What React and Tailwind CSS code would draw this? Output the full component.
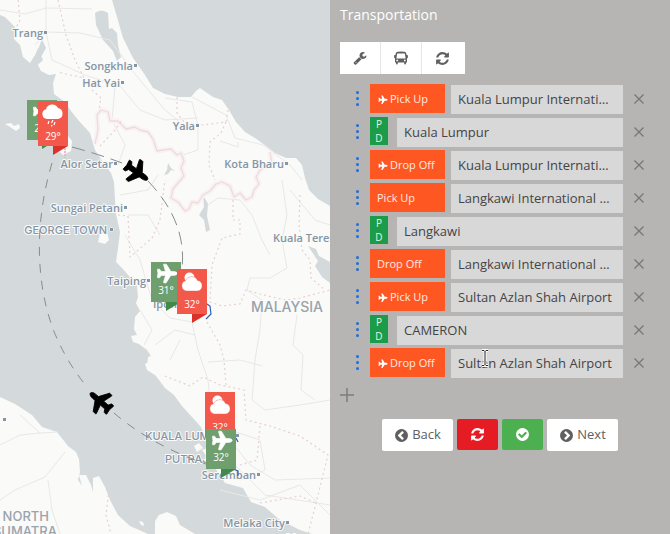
const SOLID = {
  refresh:
    "M1639 1056q0 5-1 7-64 268-268 434.5t-478 166.5q-146 0-282.5-55t-243.5-157l-129 129q-19 19-45 19t-45-19-19-45v-448q0-26 19-45t45-19h448q26 0 45 19t19 45-19 45l-137 137q71 66 161 102t187 36q134 0 250-65t186-179q11-17 53-117 8-23 30-23h192q13 0 22.5 9.5t9.5 22.5zm25-800v448q0 26-19 45t-45 19h-448q-26 0-45-19t-19-45 19-45l138-138q-148-137-349-137-134 0-250 65t-186 179q-11 17-53 117-8 23-30 23h-199q-13 0-22.5-9.5t-9.5-22.5v-7q65-268 270-434.5t480-166.5q146 0 284 55.5t245 156.5l130-129q19-19 45-19t45 19 19 45z",
  plane:
    "M1568 160q44 52 12 148t-108 172l-161 161 160 696q5 19-12 33l-128 96q-7 6-19 6-4 0-7-1-15-3-21-16l-279-508-259 259 53 194q5 17-8 31l-96 96q-9 9-23 9h-2q-15-2-24-13l-189-252-252-189q-11-7-13-23-1-13 9-25l96-97q9-9 23-9 6 0 8 1l194 53 259-259-508-279q-14-8-17-24-2-16 9-27l128-128q14-13 30-8l665 159 160-160q76-76 172-108t148 12z",
  chevron:
    "M1037 1395l102-102q19-19 19-45t-19-45l-307-307 307-307q19-19 19-45t-19-45l-102-102q-19-19-45-19t-45 19l-454 454q-19 19-19 45t19 45l454 454q19 19 45 19t45-19zm627-499q0 209-103 385.5t-279.5 279.5-385.5 103-385.5-103-279.5-279.5-103-385.5 103-385.5 279.5-279.5 385.5-103 385.5 103 279.5 279.5 103 385.5z",
  check:
    "M1412 734q0-28-18-46l-91-90q-19-19-45-19t-45 19l-408 407-226-226q-19-19-45-19t-45 19l-91 90q-18 18-18 46 0 27 18 45l362 362q19 19 45 19 27 0 46-19l543-543q18-18 18-45zm252 162q0 209-103 385.5t-279.5 279.5-385.5 103-385.5-103-279.5-279.5-103-385.5 103-385.5 279.5-279.5 385.5-103 385.5 103 279.5 279.5 103 385.5z",
  wrench:
    "M448 1472q0-26-19-45t-45-19-45 19-19 45 19 45 45 19 45-19 19-45zm644-420l-682 682q-37 37-90 37-52 0-91-37l-106-108q-38-36-38-90 0-53 38-91l681-681q39 98 114.5 173.5t173.5 114.5zm634-435q0 39-23 106-47 134-164.5 217.5t-258.5 83.5q-185 0-316.5-131.5t-131.5-316.5 131.5-316.5 316.5-131.5q58 0 121.5 16.5t107.5 46.5q16 11 16 28t-16 28l-293 169v224l193 107q5-3 79-48.5t135.5-81 70.5-35.5q15 0 23.5 10t8.5 25z",
};

function Icon({ name, className = "" }) {
  return (
    <svg viewBox="0 0 1792 1792" className={`shrink-0 fill-current ${className}`} aria-hidden="true">
      <path d={SOLID[name]} />
    </svg>
  );
}

function BusIcon() {
  return (
    <svg viewBox="0 0 14 14" className="size-[14px] shrink-0" aria-hidden="true">
      <path
        fill="currentColor"
        fillRule="evenodd"
        d="M3.500 .8Q7 .1 10.500 .8Q12 1.100 12.300 2.500L12.600 4H13.200Q13.900 4 13.900 4.700V6.500Q13.900 7.200 13.200 7.200H13V11.500H12V12.500Q12 13.400 11.100 13.400Q10.200 13.400 10.200 12.500V11.500H3.800V12.500Q3.800 13.400 2.900 13.400Q2 13.400 2 12.500V11.500H1V7.200H.8Q.1 7.200 .1 6.500V4.700Q.1 4 .8 4H1.400L1.700 2.500Q2 1.100 3.500 .8ZM3.200 2.600L2.400 7.400H11.600L10.800 2.600ZM3.200 8.500A.9 .9 0 1 0 3.200 10.300A.9 .9 0 1 0 3.200 8.500ZM10.800 8.500A.9 .9 0 1 0 10.800 10.300A.9 .9 0 1 0 10.800 8.500Z"
      />
    </svg>
  );
}

function MapPlane({ x, y, size, angle, fill }) {
  const s = size / 1792;
  return (
    <path
      d={SOLID.plane}
      fill={fill}
      stroke={fill}
      strokeWidth="50"
      transform={`translate(${x} ${y}) rotate(${angle}) scale(${s}) translate(-896 -896)`}
    />
  );
}

function AirportFlag({ x, y, temp }) {
  return (
    <g transform={`translate(${x} ${y})`}>
      <path d="M15 40H30L15 49Z" fill="#3f8a4b" />
      <rect width="30" height="40" fill="#6f9f6f" />
      <MapPlane x={14} y={12} size={22} angle={45} fill="#fff" />
      <text x="15" y="32" textAnchor="middle" fontSize="10" fill="#fff">{temp}</text>
    </g>
  );
}

function WeatherFlag({ x, y, temp, rain }) {
  return (
    <g transform={`translate(${x} ${y})`}>
      <path d="M15 45H30L15 54Z" fill="#d8322a" />
      <rect width="30" height="45" fill="#f2594b" />
      {rain ? (
        <g fill="#fff">
          <path d="M9 18a5 5 0 0 1-1-9.800A6.500 6.500 0 0 1 20 7a5.600 5.600 0 0 1 0 11Z" />
          <path d="M11 20l-1 3M15 19l-1.500 3M14 24l-.5 1.500M17 21l-1 3" stroke="#fff" strokeWidth="1.200" />
        </g>
      ) : (
        <g fill="#fff">
          <circle cx="12.500" cy="8.500" r="5" />
          <path d="M9.500 22a5.300 5.300 0 0 1-1-10.300A6.500 6.500 0 0 1 20.500 11.500a5.300 5.300 0 0 1 0 10.500Z" stroke="#f2594b" strokeWidth=".4" />
        </g>
      )}
      <text x="15" y="39" textAnchor="middle" fontSize="10" fill="#fff">{temp}</text>
    </g>
  );
}

const towns = [
  ["Trang", 43, 37],
  ["Songkhla", 133, 70],
  ["Hat Yai", 120, 87],
  ["Yala", 195, 130],
  ["Alor Setar", 113, 168],
  ["Kota Bharu", 284, 168],
  ["Sungai Petani", 123, 212],
  ["Taiping", 146, 285],
  ["Seremban", 256, 479],
  ["Melaka City", 285, 527],
];

function RouteMap() {
  return (
    <svg
      viewBox="0 0 330 534"
      preserveAspectRatio="xMinYMin slice"
      className="block h-screen min-w-0 flex-1 bg-[#d4dadc] font-['Open_Sans','Noto_Sans',sans-serif]"
      role="img"
      aria-label="Route map of Malaysia"
    >
      <path
        fill="#fafaf8"
        d="M0 0V15L5 17 15 27 14 39 20 45 23 57 30 63 35 55 39 47 42 39 46 48 41 57 38 65 41 71 49 75 56 74 53 83 54 94 65 102 71 111 79 121 90 133 95 150 103 162 111 173 114 182 115 200 116 214 120 232 118 248 116 262 122 268 129 276 137 286 138 297 136 303 140 311 135 317 134 329 137 335 131 336 133 342 139 344 147 350 151 356 150 361 145 364 147 370 155 375 159 380 165 388 174 395 182 406 192 417 201 427 205 438 208 448 202 450 207 457 203 461 212 464 220 475 225 483 243 488 251 502 265 507 280 520 300 530 312 534H330V206L318 199 309 190 305 178 302 165 296 158 286 158 275 153 266 146 255 138 245 132 236 122 229 110 222 100 213 97 200 88 196 91 191 97 178 97 165 94 153 88 145 75 133 58 123 38 117 17 112 0Z"
      />
      <g fill="#d4dadc">
        <path d="M95 13Q101 8 108 13L109 29 112 28 117 33 118 45 121 57 117 61 113 51 103 40 96 25Z" />
        <path d="M35 57L38 48 40 53 43 60 39 64Z" />
        <path d="M203 195l5 9-1 12 3 14-4 2-2-12-5-5 5-8zM308 246l8 3 3 7 11 6v21l-8-6-7-11 3-5zM168 163l3 5 4 3-4-1-3 4-4 1 3-5z" />
      </g>
      <g fill="#fafaf8">
        <path d="M0 397L15 404 32 415 42 427 57 432 68 446 76 452 79 459 80 472 78 480 82 486 79 475 86 475 91 485 93 492 93 478 99 476 105 487 110 500 118 515 130 526 148 534H0Z" />
        <path d="M155 534V521L159 515 167 512 176 516 180 525 195 534Z" />
        <path d="M68 136l4 5-1 10-8 4-6-6 3-9zM100 234l7-2 2 8-4 4-7-2zM5 124l6-1 3 3 5-2 1 4-4 3-6-4zM139 521l4 1 1 4-3-1z" />
        <path d="M148 357l8-3 9 8v14l-8-3-10-4zM194 446l5-3 4 5-6 4z" />
      </g>

      <g fill="none" stroke="#e8e8e6" strokeWidth="1" strokeLinejoin="round">
        <path d="M46 0V32L35 45M46 32L80 33 110 40 135 74 165 110 185 126M0 10L25 14 46 8 92 9M46 32L52 60 85 75 121 87 140 110 165 120 198 118" />
        <path d="M115 87L112 120 125 145 118 165M165 98L192 102 198 126 198 150 180 156M192 97L226 115 235 138 263 145 290 165 302 180" />
        <path d="M220 141l18 6v-5M120 195L148 190 158 175M128 215h20l12 20M125 235L140 260 152 300 170 318 192 322 198 350 208 380 212 420M155 345l20-15 20 5" />
        <path d="M208 205L218 198 240 200 252 215 262 240 270 255M282 180L287 215 282 240 287 268 270 278 250 278 247 290 262 300 260 330 255 360 252 400 265 410 300 405 330 400" />
        <path d="M290 190L315 220 330 225M297 315L293 345 303 355 301 390 315 400M208 362L240 360 262 366M220 410L230 440 250 465 275 480 330 478M235 465L265 495 330 505M220 490L260 500 300 485 330 515" />
        <path d="M0 445L20 435 40 433 58 432M0 500L15 490 45 477 65 452M48 480L52 510 60 534M20 415l20 18" />
        <path d="M140 310l12 20-8 15M150 280l30 10 20 30M180 340l-10 20M230 430l30 10 5 30-25 10" />
      </g>
      <g fill="none" stroke="#e7cfd3" strokeWidth="1.200" strokeLinejoin="round">
        <g>
          {[
            ["#f8f2f2", 5],
            ["#efdadd", 1.3],
          ].map(([stroke, width]) => (
            <path
              key={stroke}
              stroke={stroke}
              strokeWidth={width}
              d="M95 144L98 130 97 115 101 110 108 112 110 121 118 121 126 129 135 127 140 130 148 132 153 139 157 151 163 150 171 149 177 155 181 153 184 161 181 168 184 176 178 183 173 189 171 198 178 202 185 211 189 209 192 202 198 203 203 195 210 191 216 184 222 182 230 186 234 197 240 193 246 200 252 197 254 190 259 184 256 177 260 170 272 164 270 152"
            />
          ))}
        </g>
        <g strokeDasharray="2 3">
          <path d="M18 0L20 20 15 30M58 0L66 35 75 60 84 78 70 75 58 72M92 90L101 98 99 110M100 146L115 130 122 120M177 97V113L184 122 203 125 226 122 228 110M226 122L221 133 210 142 209 165 215 180" />
          <path d="M118 215L128 216 130 257 152 238 160 220 165 180M233 200V220H240V234L222 238 212 265 210 302 222 306 240 304 246 290 260 294 285 300 300 298 330 290M300 195L299 225 302 250 310 260 311 278 325 290" />
          <path d="M207 322L220 345 224 360 226 385M165 376L190 386 203 377 220 385 244 390 246 420 270 426 300 436 328 455 316 503 308 534M260 503L300 496 316 503M260 426L257 460 240 465" />
          <path d="M109 490L106 515 111 534" />
        </g>
      </g>
      <path d="M65 145v13" stroke="#e9b9c4" strokeWidth="2" strokeDasharray="2 1" />

      <g
        fontSize="11"
        fontWeight="600"
        fill="#8595a5"
        stroke="#fafaf8"
        strokeWidth="2"
        strokeLinejoin="round"
        paintOrder="stroke"
        textAnchor="end"
      >
        {towns.map(([name, x, y]) => (
          <g key={name}>
            <text x={x} y={y}>{name}</text>
            <rect x={x + 1} y={y - 6} width="3" height="3" strokeWidth="1" />
          </g>
        ))}
        <rect x="110" y="228" width="3" height="3" strokeWidth="1" />
        <g textAnchor="start">
          <text x="273" y="242">Kuala Terengganu</text>
          <text x="153" y="308">Ipoh</text>
          <text x="286" y="542">Muar</text>
        </g>
        <g fontFamily="Inter, 'Open Sans', sans-serif" fontWeight="500">
          <text x="107" y="234">GEORGE TOWN</text>
          <g textAnchor="start">
            <text x="145" y="440">KUALA LUMPUR</text>
            <text x="165" y="463">PUTRAJAYA</text>
          </g>
          <g fontSize="13" fill="#98a3ac">
            <text x="323" y="312" fontSize="14">MALAYSIA</text>
            <text x="49" y="521">NORTH</text>
            <text x="57" y="536">SUMATRA</text>
          </g>
        </g>
        <rect x="3" y="418" width="3" height="3" strokeWidth="1" />
        <rect x="236" y="434" width="3" height="3" strokeWidth="1" />
      </g>

      <g fill="none" stroke="#888b8d" strokeWidth="1">
        <path strokeDasharray="13 7" d="M72 147Q98 154 122 163M148 181Q190 225 181 275" />
        <path strokeDasharray="9 8" d="M52 163C35 220 35 280 53 329Q66 362 88 388M114 413Q155 448 215 467" />
      </g>
      <path d="M207 304l3 2 1 8-5 5M236 438l2 4M233 469l5 2v5" fill="none" stroke="#315fb0" strokeWidth="1.200" />

      <MapPlane x={134} y={171} size={29} angle={80} fill="#000" />
      <MapPlane x={103} y={403} size={29} angle={-94} fill="#000" />

      <AirportFlag x={27} y={100} temp="29°" />
      <WeatherFlag x={38} y={101} temp="29°" rain />
      <AirportFlag x={151} y={262} temp="31°" />
      <WeatherFlag x={177} y={269} temp="32°" />
      <WeatherFlag x={205} y={392} temp="32°" />
      <AirportFlag x={206} y={429} temp="32°" />
    </svg>
  );
}

const stops = [
  { kind: "Pick Up", plane: true, place: "Kuala Lumpur International Airport" },
  { place: "Kuala Lumpur" },
  { kind: "Drop Off", plane: true, place: "Kuala Lumpur International Airport" },
  { kind: "Pick Up", place: "Langkawi International Airport" },
  { place: "Langkawi" },
  { kind: "Drop Off", place: "Langkawi International Airport" },
  { kind: "Pick Up", plane: true, place: "Sultan Azlan Shah Airport" },
  { place: "CAMERON" },
  { kind: "Drop Off", plane: true, place: "Sultan Azlan Shah Airport", cursor: true },
];

function TextCursor() {
  return (
    <svg viewBox="0 0 8 18" className="absolute top-0 left-[30px] h-[18px] w-2" aria-hidden="true">
      <path d="M1 1.500H3L4 2.500 5 1.500H7M4 2.500V15.500M1 16.500H3L4 15.500 5 16.500H7" fill="none" stroke="#fff" strokeWidth="3" />
      <path d="M1 1.500H3L4 2.500 5 1.500H7M4 2.500V15.500M1 16.500H3L4 15.500 5 16.500H7" fill="none" stroke="#222" strokeWidth="1" />
    </svg>
  );
}

function StopRow({ stop }) {
  return (
    <li className="flex h-[30px] items-start">
      <button aria-label="Reorder stop" className="flex h-[29px] w-[30px] shrink-0 flex-col items-center justify-center gap-[3px] pl-1">
        <span className="size-[3px] rounded-full bg-[#1c6fdb]" />
        <span className="size-[3px] rounded-full bg-[#1c6fdb]" />
        <span className="size-[3px] rounded-full bg-[#1c6fdb]" />
      </button>
      {stop.kind ? (
        <button className="mr-1.5 flex h-[29px] w-[75px] shrink-0 items-center gap-[3px] bg-[#ff5722] pt-0.5 pl-[7px] text-[11px] text-[#ffeae2]">
          {stop.plane && <Icon name="plane" className="size-[10px] rotate-45 text-white" />}
          {stop.kind}
        </button>
      ) : (
        <div className="mr-[9px] flex h-[28px] w-[18px] shrink-0 flex-col text-center text-[10px] leading-[14px] text-[#e3f5e6]">
          <button className="bg-[#1b9c48]">P</button>
          <button className="bg-[#1b9c48]">D</button>
        </div>
      )}
      <div className="relative min-w-0 flex-1 self-end">
        <input
          aria-label="Place"
          defaultValue={stop.place}
          className="block h-[29px] w-full text-ellipsis bg-[#d8d8d8] px-[7px] pb-0.5 text-[13px] text-[#444]"
        />
        {stop.cursor && <TextCursor />}
      </div>
      <button aria-label="Remove stop" className="flex h-[29px] w-8 shrink-0 items-center justify-center text-[#777]">
        <svg viewBox="0 0 10 10" className="size-[10px]" aria-hidden="true">
          <path d="M.5.5l9 9M9.500.5l-9 9" stroke="currentColor" strokeWidth="1.300" />
        </svg>
      </button>
    </li>
  );
}

export default function App() {
  return (
    <div className="flex min-h-screen overflow-hidden font-['Open_Sans','Noto_Sans',sans-serif]">
      <RouteMap />
      <main className="flex w-[340px] shrink-0 flex-col bg-[#b6b5b3] pl-2.5 text-[#606060]">
        <h1 className="pt-[5px] text-[14px] leading-5 text-white">Transportation</h1>
        <div className="mt-[17px] flex h-8 divide-x divide-[#e6e6e6] self-start bg-white pr-0.5">
          <button aria-label="Settings" className="flex w-[41px] items-center justify-center">
            <Icon name="wrench" className="size-[14px]" />
          </button>
          <button aria-label="Vehicles" className="flex w-[41px] items-center justify-center">
            <BusIcon />
          </button>
          <button aria-label="Refresh" className="flex w-[41px] items-center justify-center">
            <Icon name="refresh" className="size-[15px]" />
          </button>
        </div>
        <ul className="mt-2.5 flex flex-col gap-[3px] pr-[15px]">
          {stops.map((stop, i) => (
            <StopRow key={i} stop={stop} />
          ))}
        </ul>
        <button aria-label="Add stop" className="mt-2.5 size-[14px] text-[#7c7c7b]">
          <svg viewBox="0 0 14 14" className="size-full" aria-hidden="true">
            <path d="M7 0v14M0 7h14" stroke="currentColor" strokeWidth="1.500" />
          </svg>
        </button>
        <div className="mt-[17px] flex items-start justify-center gap-1 pr-2.5 text-[13px]">
          <button className="flex h-8 w-[71px] items-center justify-center gap-[3px] rounded-[2px] bg-white">
            <Icon name="chevron" className="size-[15px]" />
            Back
          </button>
          <button aria-label="Reset" className="flex h-[31px] w-[41px] items-center justify-center rounded-[2px] bg-[#e51c23] text-white">
            <Icon name="refresh" className="size-[15px]" />
          </button>
          <button aria-label="Confirm" className="flex h-[31px] w-[41px] items-center justify-center rounded-[2px] bg-[#4caf50] text-white">
            <Icon name="check" className="size-[15px]" />
          </button>
          <button className="flex h-8 w-[71px] items-center justify-center gap-[3px] rounded-[2px] bg-white">
            <Icon name="chevron" className="size-[15px] rotate-180" />
            Next
          </button>
        </div>
      </main>
    </div>
  );
}
